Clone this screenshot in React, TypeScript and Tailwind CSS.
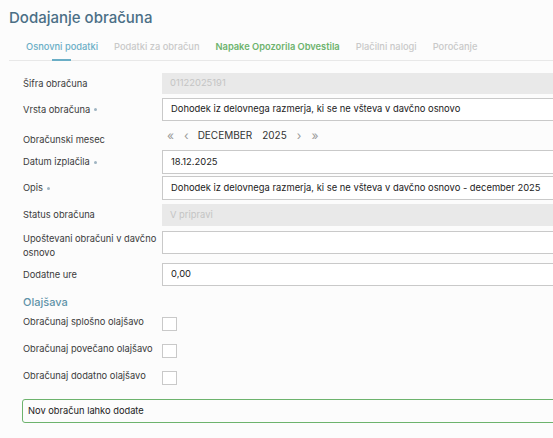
const font = { fontFamily: "Inter, 'Noto Sans', sans-serif" };

const Req = () => <span className="ml-1 inline-block h-[3px] w-[3px] rounded-full bg-[#9fb4c2] align-middle" />;

const Label = ({ children, req }: { children: React.ReactNode; req?: boolean }) => (
  <div className="w-[139px] shrink-0 text-[9.3px] leading-[14px] text-[#3b3b3b]">
    {children}
    {req && <Req />}
  </div>
);

const Field = ({ value, disabled, h = "h-[24px]" }: { value?: string; disabled?: boolean; h?: string }) =>
  disabled ? (
    <div className={`flex ${h} flex-1 items-center whitespace-nowrap bg-[#e9e9e9] px-2 text-[9.4px] text-[#c4c4c4]`}>{value}</div>
  ) : (
    <div className={`flex ${h} flex-1 items-center whitespace-nowrap border border-[#c9c9c9] bg-white px-2 text-[9.4px] text-[#222]`}>{value}</div>
  );

const tabs = [
  { t: "Osnovni podatki", c: "text-[#6aaec6]", active: true },
  { t: "Podatki za obračun", c: "text-[#c9c9c9]" },
  { t: "Napake Opozorila Obvestila", c: "text-[#6db36d] font-semibold" },
  { t: "Plačilni nalogi", c: "text-[#c9c9c9]" },
  { t: "Poročanje", c: "text-[#c9c9c9]" },
];

export default function App() {
  return (
    <div className="h-[438px] w-[553px] overflow-hidden bg-[#fcfcfc]" style={font}>
      <div className="w-[640px]">
        <h1 className="pl-[9px] pt-[8px] text-[15px] font-medium leading-[20px] text-[#4b6f86]">Dodajanje obračuna</h1>

        <div className="ml-[9px] mt-[12px] flex gap-4 border-b border-[#e8e8e8] pl-[17px]">
          {tabs.map((x) => (
            <div key={x.t} className={`relative pb-[6px] text-[9.3px] font-medium leading-[14px] ${x.c}`}>
              {x.t}
              {x.active && <div className="absolute bottom-[-1px] left-[26px] h-[2px] w-[19px] bg-[#6aaec6]" />}
            </div>
          ))}
        </div>

        <div className="pl-[23px]">
          <div className="mt-[12px] flex items-center">
            <Label>Šifra obračuna</Label>
            <Field value="01122025191" disabled h="h-[21px]" />
          </div>
          <div className="mt-[4px] flex items-center">
            <Label req>Vrsta obračuna</Label>
            <Field value="Dohodek iz delovnega razmerja, ki se ne všteva v davčno osnovo" h="h-[23px]" />
          </div>
          <div className="flex h-[29px] items-center">
            <Label>
              <div className="pt-[9px]">Obračunski mesec</div>
            </Label>
            <div className="flex items-center pl-[5px] text-[10px] text-[#333]">
              <span className="text-[12px] text-[#9a9a9a]">«</span>
              <span className="ml-[10px] text-[12px] text-[#9a9a9a]">‹</span>
              <span className="ml-[9px]">DECEMBER</span>
              <span className="ml-[10px]">2025</span>
              <span className="ml-[10px] text-[12px] text-[#9a9a9a]">›</span>
              <span className="ml-[10px] text-[12px] text-[#9a9a9a]">»</span>
            </div>
          </div>
          <div className="flex items-center">
            <Label req>Datum izplačila</Label>
            <Field value="18.12.2025" />
          </div>
          <div className="mt-[2px] flex items-center">
            <Label req>Opis</Label>
            <Field value="Dohodek iz delovnega razmerja, ki se ne všteva v davčno osnovo - december 2025" />
          </div>
          <div className="mt-[4px] flex items-center">
            <Label>Status obračuna</Label>
            <Field value="V pripravi" disabled h="h-[22px]" />
          </div>
          <div className="mt-[5px] flex items-start">
            <Label>
              <div className="pt-[1px] leading-[14px]">Upoštevani obračuni v davčno osnovo</div>
            </Label>
            <Field h="h-[23px]" />
          </div>
          <div className="mt-[3px] flex items-center">
            <Label>Dodatne ure</Label>
            <Field value="0,00" h="h-[23px]" />
          </div>

          <h2 className="mt-[8px] text-[11px] font-medium leading-[16px] text-[#5f93a8]">Olajšava</h2>

          {["Obračunaj splošno olajšavo", "Obračunaj povečano olajšavo", "Obračunaj dodatno olajšavo"].map((t, i) => (
            <div key={t} className={`flex items-center ${i === 0 ? "mt-[7px]" : "mt-[13px]"}`}>
              <Label>
                <span className="relative top-[-2px]">{t}</span>
              </Label>
              <div className="h-[14px] w-[15px] border border-[#c9c9c9] bg-white" />
            </div>
          ))}

          <div className="mr-[-1px] mt-[14px] -ml-[1px] flex h-[24px] items-center rounded-[3px] border border-[#6db36d] bg-[#fcfcfc] px-[5px] text-[9.3px] text-[#222]">
            Nov obračun lahko dodate
          </div>
        </div>
      </div>
    </div>
  );
}
